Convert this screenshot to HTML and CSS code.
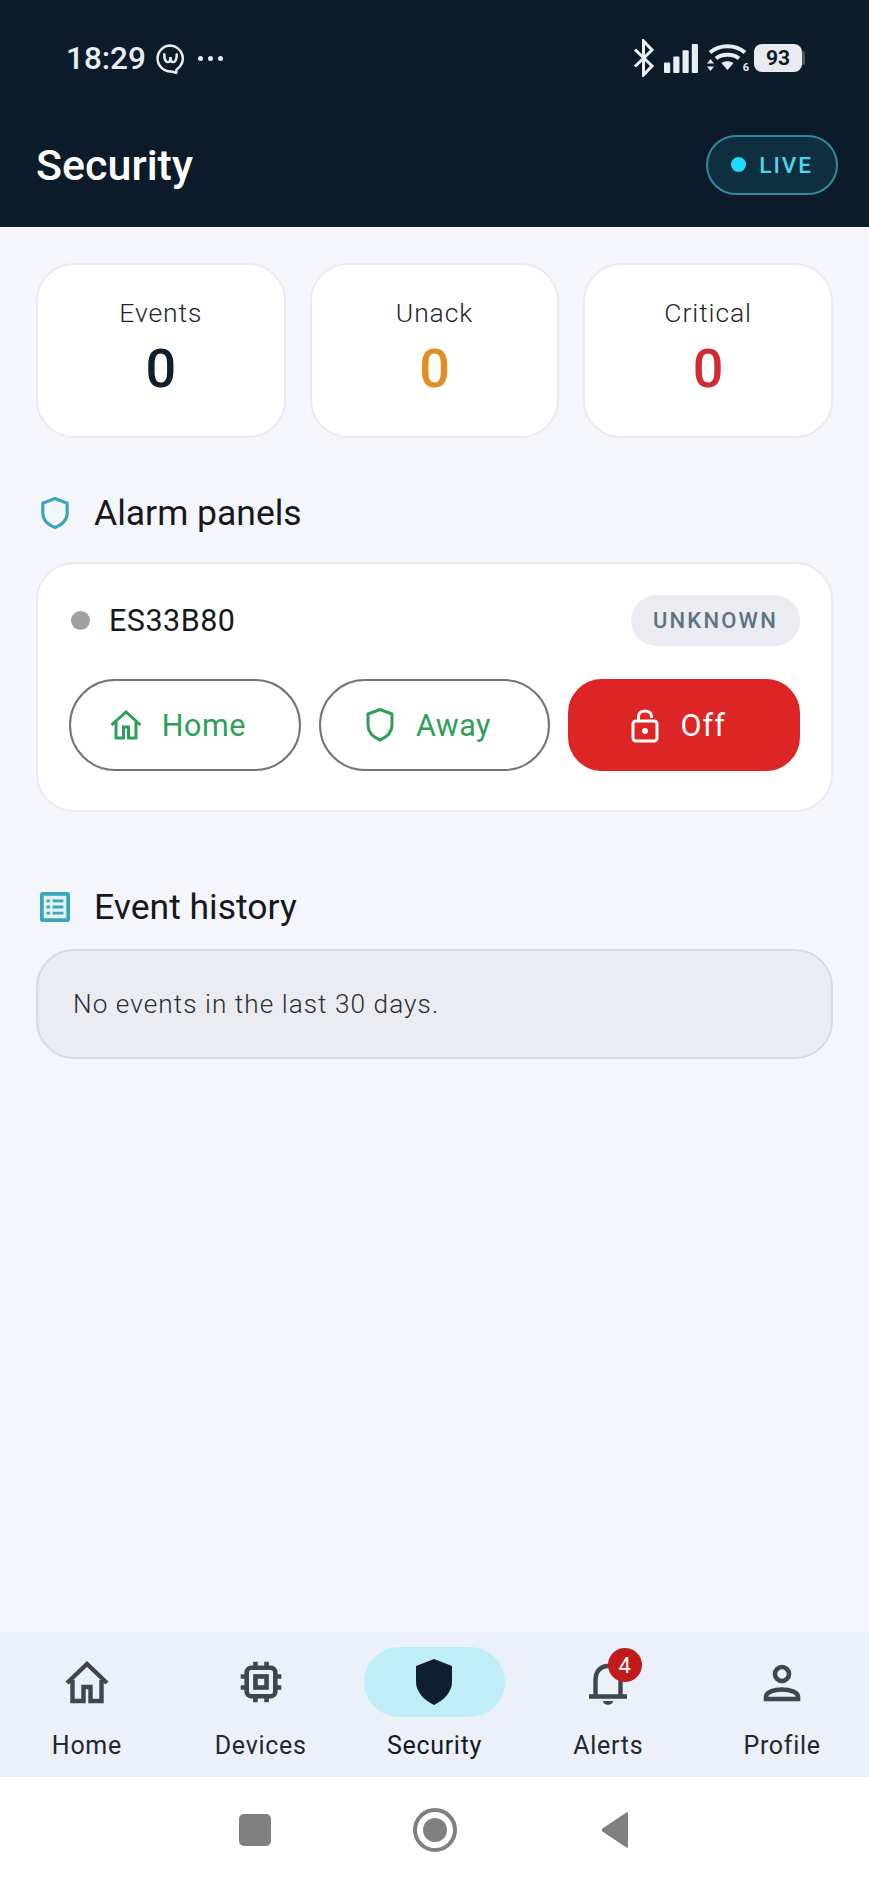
FILE: index.html
```html
<!DOCTYPE html>
<html lang="en">
<head>
<meta charset="utf-8">
<title>Security</title>
<link rel="stylesheet" href="styles.css">
</head>
<body>
<div class="screen">
  <header class="header">
    <div class="status">
      <div class="status-left">
        <span class="time">18:29</span>
        <svg class="app-icon" viewBox="0 0 30 30"><path d="M15 2.500a12.500 12.500 0 1 0 0 25c1.500 0 3 .3 4.500 1.200 1 .5 1.500 0 1.200-1-.2-.8-.2-1.500.6-2.300A12.500 12.500 0 0 0 15 2.500Z" fill="none" stroke="#e8edf4" stroke-width="2.400"/><path d="M9 11c-.3 5 1.500 7.500 3.500 7.500S15 16 15 13.500c0 2.500.5 5 2.500 5S21.300 16 21 11" fill="none" stroke="#e8edf4" stroke-width="2.400" stroke-linecap="round"/></svg>
        <span class="dots"><i></i><i></i><i></i></span>
      </div>
      <div class="status-right">
        <svg class="bt" viewBox="0 0 24 38"><path d="M3 10.500 20 27l-8.500 9V2L20 11 3 27.500" fill="none" stroke="#eef1f6" stroke-width="3"/></svg>
        <svg class="signal" viewBox="0 0 34 28"><rect x="0" y="18" width="6" height="10" rx="1" fill="#e8edf4"/><rect x="9" y="12" width="6" height="16" rx="1" fill="#e8edf4"/><rect x="18" y="6" width="6" height="22" rx="1" fill="#e8edf4"/><rect x="27" y="0" width="6" height="28" rx="1" fill="#e8edf4"/></svg>
        <div class="wifi">
          <svg viewBox="0 0 42 30"><path d="M3 9.500c9.500-8.500 25.500-8.500 35 0M9 15.500c6-5 17-5 23 0" fill="none" stroke="#e8edf4" stroke-width="4"/><path d="M14.500 20c3.500-2.500 8.500-2.500 12 0l-6 7Z" fill="#e8edf4"/><path d="M3.500 16l3.500 4.500H0ZM3.500 28 0 23.500h7Z" fill="#e8edf4"/></svg>
          <span class="wifi-six">6</span>
        </div>
        <div class="battery"><span class="battery-body">93</span><span class="battery-nub"></span></div>
      </div>
    </div>
    <div class="titlebar">
      <h1 class="title">Security</h1>
      <div class="live"><span class="live-dot"></span><span class="live-text">LIVE</span></div>
    </div>
  </header>

  <main class="main">
    <section class="stats">
      <div class="stat"><div class="stat-label">Events</div><div class="stat-value navy">0</div></div>
      <div class="stat"><div class="stat-label">Unack</div><div class="stat-value amber">0</div></div>
      <div class="stat"><div class="stat-label">Critical</div><div class="stat-value red">0</div></div>
    </section>

    <h2 class="section-title first">
      <svg class="section-icon" viewBox="0 0 32 36"><path d="M16 2.500 29 7.500V18c0 7.500-5.500 12.500-13 15.500C8.500 30.500 3 25.500 3 18V7.500Z" fill="none" stroke="#37a7b9" stroke-width="3.400" stroke-linejoin="round"/></svg>
      <span>Alarm panels</span>
    </h2>

    <section class="panel">
      <div class="panel-head">
        <span class="panel-dot"></span>
        <span class="panel-name">ES33B80</span>
        <span class="chip">UNKNOWN</span>
      </div>
      <div class="actions">
        <button class="action">
          <svg class="action-icon" viewBox="0 0 32 32"><path d="M1.500 16 16 3l14.500 13M6 13v16h7.500V18h5v11H26V13" fill="none" stroke="#2f9e58" stroke-width="3"/></svg>
          <span>Home</span>
        </button>
        <button class="action">
          <svg class="action-icon" viewBox="0 0 32 36"><path d="M16 2.500 28 7v11c0 7-5 12-12 15C9 30 4 25 4 18V7Z" fill="none" stroke="#2f9e58" stroke-width="3" stroke-linejoin="round"/></svg>
          <span>Away</span>
        </button>
        <button class="action action-off">
          <svg class="action-icon" viewBox="0 0 32 36"><rect x="4" y="14" width="24" height="20" rx="3" fill="none" stroke="#fff" stroke-width="3"/><path d="M9.500 14V9.500C9.500 2 22.500 2 22.500 9.500V11" fill="none" stroke="#fff" stroke-width="3"/><circle cx="16" cy="24" r="3" fill="#fff"/></svg>
          <span>Off</span>
        </button>
      </div>
    </section>

    <h2 class="section-title second">
      <svg class="section-icon" viewBox="0 0 32 32"><rect x="2" y="2" width="28" height="28" rx="1" fill="#e2f2f5" stroke="#37a7b9" stroke-width="4"/><path d="M7 9.500h3.500M7 16h3.500M7 22.500h3.500M13.500 9.500H25M13.500 16H25M13.500 22.500H25" stroke="#37a7b9" stroke-width="3"/></svg>
      <span>Event history</span>
    </h2>

    <section class="empty">No events in the last 30 days.</section>
  </main>

  <nav class="nav">
    <div class="nav-item">
      <div class="nav-icon">
        <svg viewBox="0 0 48 48"><path d="M4 25 24 6l20 19M9.500 22v21h11V29h7v14h11V22" fill="none" stroke="#3f4651" stroke-width="4.400"/></svg>
      </div>
      <span class="nav-label">Home</span>
    </div>
    <div class="nav-item">
      <div class="nav-icon">
        <svg viewBox="-2 -2 52 52"><rect x="8.500" y="8.500" width="31" height="31" rx="5" fill="none" stroke="#3f4651" stroke-width="5"/><rect x="18" y="18" width="12" height="12" fill="none" stroke="#3f4651" stroke-width="5"/><path d="M18 2v6M30 2v6M18 40v6M30 40v6M2 18h6M2 30h6M40 18h6M40 30h6" stroke="#3f4651" stroke-width="5"/></svg>
      </div>
      <span class="nav-label">Devices</span>
    </div>
    <div class="nav-item">
      <div class="nav-icon active">
        <svg viewBox="0 0 48 48"><path d="M24 1 42 8v16c0 10-8 18-18 23C14 42 6 34 6 24V8Z" fill="#0f1f30"/></svg>
      </div>
      <span class="nav-label nav-label-active">Security</span>
    </div>
    <div class="nav-item">
      <div class="nav-icon">
        <svg viewBox="0 0 48 48"><path d="M11.500 37V22c0-9 5.500-14 12.500-14s12.500 5 12.500 14v15M5 38.500h38" fill="none" stroke="#3f4651" stroke-width="4.400"/><path d="M19 43h10c0 5-10 5-10 0Z" fill="#3f4651"/></svg>
        <span class="badge">4</span>
      </div>
      <span class="nav-label">Alerts</span>
    </div>
    <div class="nav-item">
      <div class="nav-icon">
        <svg viewBox="0 0 48 48"><circle cx="24" cy="16" r="7" fill="none" stroke="#3f4651" stroke-width="4.600"/><path d="M8 41v-2c0-10 32-10 32 0v2Z" fill="none" stroke="#3f4651" stroke-width="4.600"/></svg>
      </div>
      <span class="nav-label">Profile</span>
    </div>
  </nav>

  <footer class="system">
    <div class="sys-cell"><span class="sys-square"></span></div>
    <div class="sys-cell"><span class="sys-circle"><span class="sys-core"></span></span></div>
    <div class="sys-cell">
      <svg class="sys-back" viewBox="0 0 30 38"><path d="M28 2.500V35.500c0 1-1 1.500-2 .8L2.500 20.500c-1-.7-1-2.300 0-3L26 1.700c1-.7 2-.2 2 .8Z" fill="#808080"/></svg>
    </div>
  </footer>
</div>
</body>
</html>
```
FILE: styles.css
```css
* { box-sizing: border-box; }
html, body { margin: 0; padding: 0; }
body { font-family: Roboto, "Noto Sans", sans-serif; background: #f5f6fb; }
.screen { width: 869px; height: 1882px; display: flex; flex-direction: column; overflow: hidden; }

.header { height: 227px; background: #0c1b2a; color: #fff; display: flex; flex-direction: column; }
.status { height: 116px; padding: 0 64px 0 66px; display: flex; justify-content: space-between; align-items: center; }
.status-left { display: flex; align-items: center; }
.time { font-size: 31.500px; color: #e8edf4; font-weight: 500; }
.app-icon { width: 31px; height: 31px; margin-left: 9px; }
.dots { display: flex; gap: 5px; margin-left: 12px; }
.dots i { width: 5px; height: 5px; border-radius: 50%; background: #e8edf4; }
.status-right { display: flex; align-items: center; }
.bt { width: 24px; height: 38px; }
.signal { width: 35px; height: 29px; margin-left: 8px; }
.wifi { position: relative; width: 42px; height: 30px; margin-left: 8px; }
.wifi svg { display: block; width: 42px; height: 30px; }
.wifi-six { position: absolute; right: 0; bottom: 0; font-size: 11px; line-height: 11px; font-weight: 700; color: #e8edf4; }
.battery { display: flex; align-items: center; margin-left: 5px; }
.battery-body { width: 48px; height: 28px; background: #e9ebf0; border-radius: 8px; color: #0c1b2a; font-size: 21px; font-weight: 700; display: flex; align-items: center; justify-content: center; }
.battery-nub { width: 3px; height: 14px; background: #4b5563; border-radius: 0 2px 2px 0; }

.titlebar { flex: 1; padding: 0 31px 14px 36px; display: flex; justify-content: space-between; align-items: center; }
.title { margin: 0; font-size: 43px; font-weight: 500; color: #fff; }
.live { height: 60px; padding: 0 23px 0 23px; display: flex; align-items: center; gap: 13px; background: #0f2f40; border: 2px solid #2e8b9c; border-radius: 30px; }
.live-dot { width: 15px; height: 15px; border-radius: 50%; background: #1fdcff; }
.live-text { font-size: 22.500px; font-weight: 500; letter-spacing: 2px; color: #4ed5e8; }

.main { flex: 1; padding: 36px 36px 0; }
.stats { display: grid; grid-template-columns: repeat(3, 1fr); gap: 24px; }
.stat { height: 175px; padding-top: 31px; background: #fff; border: 2px solid #e9ebf1; border-radius: 38px; text-align: center; }
.stat-label { font-size: 26.500px; font-weight: 300; letter-spacing: .9px; line-height: 34px; color: #23272e; }
.stat-value { font-size: 54px; font-weight: 500; line-height: 60px; margin-top: 9px; }
.navy { color: #0f1f30; }
.amber { color: #e08e25; }
.red { color: #d02b30; }

.section-title { margin: 0; display: flex; align-items: center; gap: 24px; font-size: 35.500px; font-weight: 450; color: #15181e; line-height: 44px; }
.section-title.first { margin-top: 53px; }
.section-title.second { margin-top: 73px; }
.section-icon { width: 30px; height: 34px; margin-left: 4px; flex: none; }

.panel { margin-top: 27px; height: 250px; padding: 30px 31px 0; background: #fff; border: 2px solid #e9ebf1; border-radius: 38px; }
.panel-head { display: flex; align-items: center; height: 52px; }
.panel-dot { width: 19px; height: 19px; margin-left: 2px; border-radius: 50%; background: #a0a0a0; }
.panel-name { margin-left: 19px; font-size: 30.500px; font-weight: 450; color: #15181e; letter-spacing: .5px; }
.chip { margin-left: auto; height: 51px; padding: 0 22px; display: flex; align-items: center; background: #eaecf1; border-radius: 26px; color: #5d7382; font-size: 22px; font-weight: 500; letter-spacing: 2.200px; }
.actions { margin-top: 33px; display: grid; grid-template-columns: repeat(3, 1fr); gap: 18px; }
.action { height: 92px; padding: 0 14px 0 0; display: flex; align-items: center; justify-content: center; gap: 20px; background: #fff; border: 2.500px solid #757575; border-radius: 46px; color: #2f9e58; font-family: Roboto, sans-serif; font-size: 30.500px; font-weight: 400; letter-spacing: .5px; }
.action-off { background: #dc2626; border-color: #dc2626; border-radius: 34px; color: #fff; font-weight: 450; letter-spacing: 1px; }
.action-icon { width: 32px; height: 36px; }

.empty { margin-top: 20px; height: 110px; padding: 0 35px; display: flex; align-items: center; background: #ebecf2; border: 2px solid #d8dae2; border-radius: 38px; color: #2a2e35; font-size: 26.200px; font-weight: 300; letter-spacing: 1.050px; }

.nav { height: 145px; background: #ecf0f8; display: grid; grid-template-columns: repeat(5, 1fr); padding-top: 15px; }
.nav-item { display: flex; flex-direction: column; align-items: center; }
.nav-icon { position: relative; width: 141px; height: 70px; border-radius: 35px; display: flex; align-items: center; justify-content: center; }
.nav-icon svg { width: 48px; height: 48px; }
.nav-icon.active { background: #c0eef8; }
.badge { position: absolute; left: 70px; top: 1px; width: 34px; height: 34px; border-radius: 50%; background: #c01a1a; color: #fff; font-size: 22px; display: flex; align-items: center; justify-content: center; }
.nav-label { margin-top: 13px; font-size: 25px; line-height: 32px; letter-spacing: .7px; color: #23272e; }
.nav-label-active { font-weight: 450; color: #15181e; }

.system { height: 105px; background: #fff; display: flex; justify-content: center; align-items: center; }
.sys-cell { width: 180px; display: flex; justify-content: center; }
.sys-square { width: 32px; height: 32px; background: #808080; border-radius: 5px; }
.sys-circle { width: 44px; height: 44px; border: 4px solid #808080; border-radius: 50%; display: flex; align-items: center; justify-content: center; }
.sys-core { width: 24px; height: 24px; background: #808080; border-radius: 50%; }
.sys-back { width: 30px; height: 38px; }
```
